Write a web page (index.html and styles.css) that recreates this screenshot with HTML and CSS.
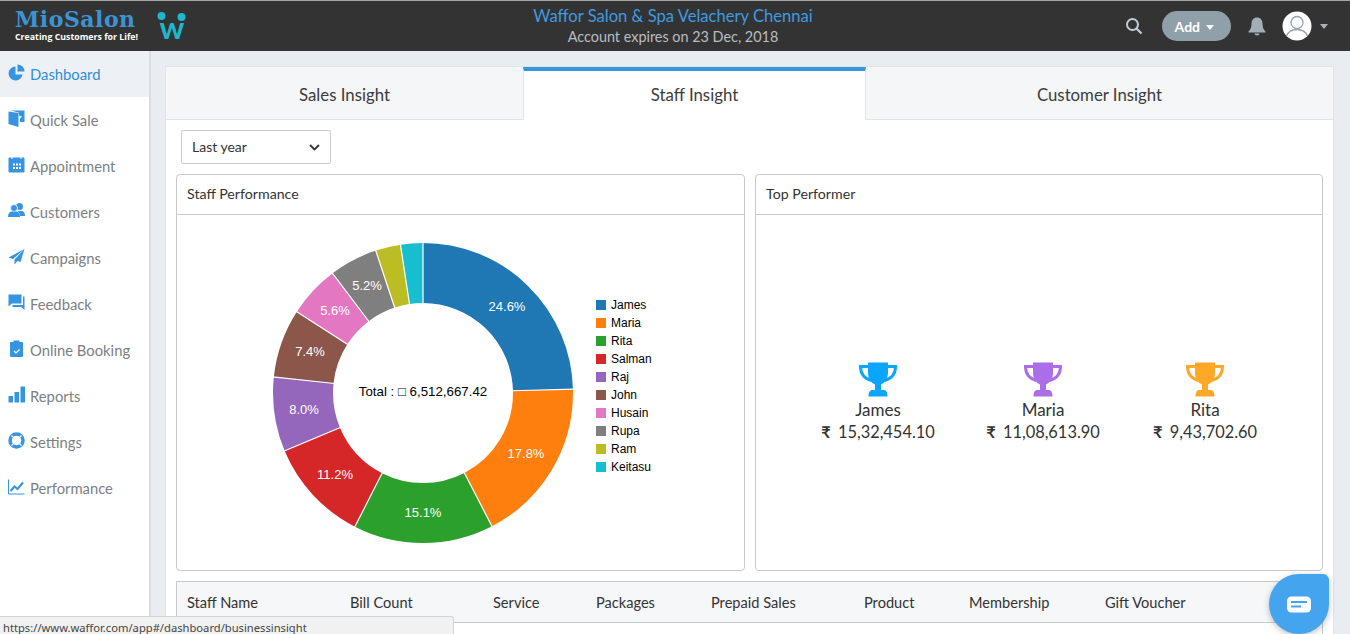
FILE: index.html
```html
<!DOCTYPE html>
<html lang="en">
<head>
<meta charset="utf-8">
<title>MioSalon Dashboard</title>
<link rel="stylesheet" href="styles.css">
</head>
<body>
<svg class="defs" width="0" height="0" aria-hidden="true">
  <symbol id="trophy" viewBox="0 0 38 35">
    <path d="M9 0.500h20v10c0 6.500-3.500 10.500-7 12v5.500h2.500c2.800 0 4 2.500 4 6.500H9.500c0-4 1.200-6.500 4-6.500H16v-5.500c-3.500-1.500-7-5.500-7-12z" fill="currentColor"/>
    <path d="M9 4.500H1.500c0 7 3.500 12 11 14M29 4.500h7.500c0 7-3.500 12-11 14" fill="none" stroke="currentColor" stroke-width="3"/>
  </symbol>
</svg>

<header class="topbar">
  <div class="brand">
    <div class="logo">
      <span class="logo-name">MioSalon</span>
      <span class="logo-tag">Creating Customers for Life!</span>
    </div>
    <svg class="w-mark" width="34" height="40" viewBox="0 0 34 40">
      <circle cx="4.500" cy="10" r="4" fill="#1cb8cf"/>
      <circle cx="24.500" cy="11" r="4" fill="#1cb8cf"/>
      <text x="15" y="33" text-anchor="middle" class="w-letter">w</text>
    </svg>
  </div>
  <div class="head-center">
    <div class="salon">Waffor Salon &amp; Spa Velachery Chennai</div>
    <div class="expiry">Account expires on 23 Dec, 2018</div>
  </div>
  <div class="head-tools">
    <svg class="ico-search" width="18" height="18" viewBox="0 0 18 18"><circle cx="7.500" cy="7.500" r="5.500" fill="none" stroke="#c3ccd2" stroke-width="2"/><path d="M11.500 11.500l5 5" stroke="#c3ccd2" stroke-width="2.200"/></svg>
    <button class="add-btn">Add <span class="caret-w"></span></button>
    <svg class="ico-bell" width="20" height="20" viewBox="0 0 20 20"><path d="M10 1.500c3.500 0 5.500 2.700 5.500 6 0 4 1 6 3 8v1H1.500v-1c2-2 3-4 3-8 0-3.300 2-6 5.500-6z" fill="#a3afb6"/><path d="M7.500 17.500h5c0 1.300-1 2-2.500 2s-2.500-.7-2.500-2z" fill="#a3afb6"/></svg>
    <svg class="ico-avatar" width="30" height="30" viewBox="0 0 30 30"><circle cx="15" cy="15" r="14.500" fill="#fff"/><circle cx="15" cy="11.500" r="6" fill="none" stroke="#9ba3a8" stroke-width="1.300"/><path d="M4.500 25c2-5 6-6.500 10.500-6.500s8.500 1.500 10.500 6.500" fill="none" stroke="#9ba3a8" stroke-width="1.300"/></svg>
    <span class="caret-g"></span>
  </div>
</header>

<div class="layout">
  <nav class="sidebar">
    <a class="nav-item active"><svg width="17" height="17" viewBox="0 0 17 17"><path d="M7.500 2.500a7 7 0 1 0 7 8H7.500z" fill="currentColor"/><path d="M9.500 0.500a7 7 0 0 1 7 7h-7z" fill="currentColor"/></svg>Dashboard</a>
    <a class="nav-item"><svg width="17" height="17" viewBox="0 0 17 17"><path d="M0.500 1.500l10 1.500v14l-10-3z" fill="currentColor"/><path d="M2.500 0.500h14v11.500h-4.500V8.500l2-2-2.500-.5-1-3.500z" fill="currentColor"/></svg>Quick Sale</a>
    <a class="nav-item"><svg width="17" height="17" viewBox="0 0 17 17"><path d="M1.500 1.500h14a1 1 0 0 1 1 1v13a1 1 0 0 1-1 1h-14a1 1 0 0 1-1-1v-13a1 1 0 0 1 1-1z" fill="currentColor"/><path d="M4 0v3M13 0v3" stroke="#fff" stroke-width="1"/><path d="M5 7.500h2v2H5zM8 7.500h2v2H8zM11 7.500h2v2h-2zM5 11h2v2H5zM8 11h2v2H8zM11 11h2v2h-2z" fill="#fff"/></svg>Appointment</a>
    <a class="nav-item"><svg width="17" height="17" viewBox="0 0 17 17"><circle cx="11.500" cy="4.500" r="3.500" fill="currentColor"/><path d="M9.500 9h4c2 0 3.500 1.500 3.500 5h-5c0-2-1-4-2.500-5z" fill="currentColor"/><circle cx="6" cy="6" r="3.500" stroke="#fff" stroke-width=".8" fill="currentColor"/><path d="M0 15c0-3.500 1.500-5.500 4-5.500h4c2.500 0 4 2 4 5.500z" fill="currentColor"/></svg>Customers</a>
    <a class="nav-item"><svg width="17" height="17" viewBox="0 0 17 17"><path d="M16.500 1L0.500 9.500l4.500 1.500zM16.500 1L6.500 11.500v5l3-3.500 3 1z" fill="currentColor"/></svg>Campaigns</a>
    <a class="nav-item"><svg width="17" height="17" viewBox="0 0 17 17"><path d="M0.500 0.500h13v9H4l-3.500 3z" fill="currentColor"/><path d="M15 2.500h1.500V16L13 13H4.500v-2H15z" fill="currentColor"/></svg>Feedback</a>
    <a class="nav-item"><svg width="17" height="17" viewBox="0 0 17 17"><path d="M3 2h2.500V.5h6V2H14a1 1 0 0 1 1 1v13a1 1 0 0 1-1 1H3a1 1 0 0 1-1-1V3a1 1 0 0 1 1-1z" fill="currentColor"/><path d="M6 11l2 2 3.500-3.500" fill="none" stroke="#fff" stroke-width="1.200"/></svg>Online Booking</a>
    <a class="nav-item"><svg width="17" height="17" viewBox="0 0 17 17"><path d="M0.500 10h4.500v6.500H.5zM6.500 6h4.500v10.500H6.500zM12.500 0.500h4.500v16h-4.500z" fill="currentColor"/></svg>Reports</a>
    <a class="nav-item"><svg width="17" height="17" viewBox="0 0 17 17"><circle cx="8.500" cy="8.500" r="6.500" fill="none" stroke="currentColor" stroke-width="3.500"/><path d="M3.500 3.500l2.500 2.500M13.500 3.500L11 6M3.500 13.500L6 11M13.500 13.500L11 11" stroke="#fff" stroke-width="1.200"/></svg>Settings</a>
    <a class="nav-item"><svg width="17" height="17" viewBox="0 0 17 17"><path d="M.5 1.500v14.500h16" fill="none" stroke="currentColor" stroke-width="1"/><path d="M2.500 13l4-4.500 3 2.500 5.500-6.500" fill="none" stroke="currentColor" stroke-width="2"/></svg>Performance</a>
  </nav>

  <main class="content">
    <section class="card">
      <div class="tabs">
        <div class="tab">Sales Insight</div>
        <div class="tab tab-active">Staff Insight</div>
        <div class="tab">Customer Insight</div>
      </div>
      <div class="card-body">
        <div class="select-box"><span class="select-text">Last year</span>
          <svg width="11" height="7" viewBox="0 0 11 7"><path d="M1 1l4.500 4.500L10 1" fill="none" stroke="#333" stroke-width="1.800"/></svg>
        </div>
        <div class="panels">
          <article class="panel">
            <h2 class="panel-head">Staff Performance</h2>
            <div class="chart-body">
              <svg class="donut" width="300" height="300" viewBox="-150 -150 300 300">
                <g transform="rotate(-90)" fill="none" stroke-width="60">
                  <circle r="120" pathLength="100" stroke="#1f77b4" stroke-dasharray="24.6 75.4"/>
                  <circle r="120" pathLength="100" stroke="#ff7f0e" stroke-dasharray="17.8 82.2" stroke-dashoffset="-24.6"/>
                  <circle r="120" pathLength="100" stroke="#2ca02c" stroke-dasharray="15.1 84.9" stroke-dashoffset="-42.4"/>
                  <circle r="120" pathLength="100" stroke="#d62728" stroke-dasharray="11.2 88.8" stroke-dashoffset="-57.5"/>
                  <circle r="120" pathLength="100" stroke="#9467bd" stroke-dasharray="8 92" stroke-dashoffset="-68.7"/>
                  <circle r="120" pathLength="100" stroke="#8c564b" stroke-dasharray="7.4 92.6" stroke-dashoffset="-76.7"/>
                  <circle r="120" pathLength="100" stroke="#e377c2" stroke-dasharray="5.6 94.4" stroke-dashoffset="-84.1"/>
                  <circle r="120" pathLength="100" stroke="#7f7f7f" stroke-dasharray="5.2 94.8" stroke-dashoffset="-89.7"/>
                  <circle r="120" pathLength="100" stroke="#bcbd22" stroke-dasharray="2.7 97.3" stroke-dashoffset="-94.9"/>
                  <circle r="120" pathLength="100" stroke="#17becf" stroke-dasharray="2.4 97.6" stroke-dashoffset="-97.6"/>
                </g>
                <g class="seps">
                  <path d="M0-89V-151"/>
                  <path d="M0-89V-151" transform="rotate(88.56)"/>
                  <path d="M0-89V-151" transform="rotate(152.64)"/>
                  <path d="M0-89V-151" transform="rotate(207)"/>
                  <path d="M0-89V-151" transform="rotate(247.32)"/>
                  <path d="M0-89V-151" transform="rotate(276.12)"/>
                  <path d="M0-89V-151" transform="rotate(302.76)"/>
                  <path d="M0-89V-151" transform="rotate(322.92)"/>
                  <path d="M0-89V-151" transform="rotate(341.64)"/>
                  <path d="M0-89V-151" transform="rotate(351.36)"/>
                </g>
                <g class="pct">
                  <text x="84" y="-82">24.6%</text>
                  <text x="103" y="65">17.8%</text>
                  <text x="0" y="124">15.1%</text>
                  <text x="-88" y="86">11.2%</text>
                  <text x="-119" y="21">8.0%</text>
                  <text x="-113" y="-37">7.4%</text>
                  <text x="-88" y="-78">5.6%</text>
                  <text x="-56" y="-103">5.2%</text>
                </g>
                <text class="total" x="0" y="3">Total : <tspan class="tofu">□</tspan> 6,512,667.42</text>
              </svg>
              <ul class="legend">
                <li><i class="c1"></i>James</li>
                <li><i class="c2"></i>Maria</li>
                <li><i class="c3"></i>Rita</li>
                <li><i class="c4"></i>Salman</li>
                <li><i class="c5"></i>Raj</li>
                <li><i class="c6"></i>John</li>
                <li><i class="c7"></i>Husain</li>
                <li><i class="c8"></i>Rupa</li>
                <li><i class="c9"></i>Ram</li>
                <li><i class="c10"></i>Keitasu</li>
              </ul>
            </div>
          </article>
          <article class="panel">
            <h2 class="panel-head">Top Performer</h2>
            <div class="top-body">
              <div class="performer blue"><svg width="38" height="35"><use href="#trophy"/></svg><div class="p-name">James</div><div class="p-amt"><b>₹</b> 15,32,454.10</div></div>
              <div class="performer purple"><svg width="38" height="35"><use href="#trophy"/></svg><div class="p-name">Maria</div><div class="p-amt"><b>₹</b> 11,08,613.90</div></div>
              <div class="performer orange"><svg width="38" height="35"><use href="#trophy"/></svg><div class="p-name">Rita</div><div class="p-amt"><b>₹</b> 9,43,702.60</div></div>
            </div>
          </article>
        </div>
        <div class="table">
          <div class="thead">
            <span>Staff Name</span><span>Bill Count</span><span>Service</span><span>Packages</span><span>Prepaid Sales</span><span>Product</span><span>Membership</span><span>Gift Voucher</span>
          </div>
        </div>
      </div>
    </section>
  </main>
</div>

<div class="status">https://www.waffor.com/app#/dashboard/businessinsight</div>
<button class="chat" aria-label="Chat">
  <svg width="24" height="17" viewBox="0 0 24 17"><rect width="24" height="16" y=".5" rx="4.500" fill="#fff"/><path d="M4 6h16" stroke="#44a4ee" stroke-width="2"/><path d="M4 10.500h10" stroke="#44a4ee" stroke-width="2"/></svg>
</button>
</body>
</html>
```
FILE: styles.css
```css
* { box-sizing: border-box; }
html, body { margin: 0; height: 100%; overflow: hidden; }
body {
  font-family: Lato, "Noto Sans", sans-serif;
  color: #333;
  background: #e9edf2;
  display: flex;
  flex-direction: column;
}
.defs { display: block; height: 0; }

/* Top bar */
.topbar {
  flex: 0 0 51px;
  background: #333;
  border-top: 1px solid #a5a5a5;
  display: grid;
  grid-template-columns: 1fr auto 1fr;
  align-items: center;
  padding: 0 22px 0 15px;
}
.brand { display: flex; align-items: center; gap: 17px; }
.logo { display: flex; flex-direction: column; width: 125px; margin-top: -4px; }
.logo-name {
  font-family: "DejaVu Serif", serif;
  font-weight: 700;
  font-size: 22px;
  line-height: 26px;
  letter-spacing: .5px;
  color: #3c93d6;
  white-space: nowrap;
}
.logo-tag {
  font-family: "Open Sans", sans-serif;
  font-size: 8.800px;
  line-height: 11px;
  font-weight: 700;
  color: #fff;
  white-space: nowrap;
}
.w-letter { font-family: Lato, sans-serif; font-weight: 700; font-size: 31px; fill: #1cb8cf; }
.head-center { text-align: center; padding-left: 3px; }
.salon { font-size: 16.600px; line-height: 22px; color: #3f9ae0; }
.expiry { font-size: 14.400px; line-height: 20px; color: #b9bdc0; }
.head-tools { display: flex; align-items: center; justify-content: flex-end; }
.ico-search { margin-right: 19px; }
.add-btn {
  width: 69px;
  height: 30px;
  border: 0;
  border-radius: 15px;
  background: #8fa0a9;
  color: #fff;
  font: 700 14px Lato, sans-serif;
  margin-right: 16px;
  padding: 0 4px 0 0;
}
.caret-w, .caret-g {
  display: inline-block;
  width: 0; height: 0;
  border-left: 4.500px solid transparent;
  border-right: 4.500px solid transparent;
  border-top: 5px solid #fff;
  vertical-align: 2px;
  margin-left: 3px;
}
.caret-g { border-top-color: #a9b2b8; margin-left: 8px; }
.ico-bell { margin-right: 15px; }

/* Frame */
.layout { flex: 1; display: flex; min-height: 0; }
.sidebar {
  flex: 0 0 151px;
  background: #fff;
  border-right: 2px solid #d9dde1;
}
.nav-item {
  height: 46px;
  display: flex;
  align-items: center;
  gap: 5px;
  padding-left: 8px;
  font-size: 14.800px;
  color: #7c7f83;
}
.nav-item svg { color: #3794e0; flex: none; margin-top: -4px; }
.active { background: #edf1f5; color: #2f8ed6; }

.content { flex: 1; padding: 15px 16px 0 14px; min-width: 0; overflow: hidden; }
.card { background: #fff; border: 1px solid #dfe4e8; border-bottom: 0; height: 100%; }
.tabs { display: grid; grid-template-columns: 357px 343px 1fr; height: 53px; background: #f4f6f8; }
.tab {
  display: flex;
  align-items: center;
  justify-content: center;
  padding-top: 2px;
  font-size: 16.800px;
  color: #3c3c3c;
  border-bottom: 1px solid #dfe4e8;
}
.tab-active {
  background: #fff;
  padding: 0 0 2px;
  border-top: 4px solid #3498db;
  border-bottom: 0;
  border-left: 1px solid #dfe4e8;
  border-right: 1px solid #dfe4e8;
}
.card-body { padding: 10px 10px 0; }
.select-box {
  width: 150px;
  height: 34px;
  margin-left: 5px;
  border: 1px solid #ccc;
  border-radius: 2px;
  display: flex;
  align-items: center;
  justify-content: space-between;
  padding: 0 10px;
  font-size: 14px;
  background: #fff;
}
.select-text { margin-top: -2px; }
.panels { display: grid; grid-template-columns: 569px 568px; gap: 10px; margin-top: 10px; }
.panel { height: 397px; border: 1px solid #c9c9c9; border-radius: 4px; background: #fff; }
.panel-head {
  margin: 0;
  height: 40px;
  padding: 0 10px;
  font-size: 14.200px;
  font-weight: 400;
  line-height: 37px;
  border-bottom: 1px solid #c9c9c9;
}
.chart-body { display: flex; padding: 28px 0 0 96px; }
.donut { flex: none; overflow: visible; }
.seps path { stroke: #fff; stroke-width: 1.200; }
.pct text { font: 13px "Liberation Sans", sans-serif; fill: #fff; text-anchor: middle; }
.total { font: 13.300px "Liberation Sans", sans-serif; fill: #000; text-anchor: middle; }
.tofu { font-size: 13px; }
.legend {
  list-style: none;
  margin: 53px 0 0 23px;
  padding: 0;
  font: 12px/18px "Liberation Sans", sans-serif;
  color: #000;
}
.legend li { display: flex; align-items: center; gap: 5px; height: 18px; }
.legend i { width: 10px; height: 10px; display: block; }
.c1 { background: #1f77b4; } .c2 { background: #ff7f0e; } .c3 { background: #2ca02c; }
.c4 { background: #d62728; } .c5 { background: #9467bd; } .c6 { background: #8c564b; }
.c7 { background: #e377c2; } .c8 { background: #7f7f7f; } .c9 { background: #bcbd22; }
.c10 { background: #17becf; }
.top-body { display: flex; justify-content: center; padding: 147px 0 0 5px; }
.performer { width: 165px; text-align: center; display: flex; flex-direction: column; align-items: center; }
.performer:last-child { margin-left: -3px; }
.blue svg { color: #0aa5ff; }
.purple svg { color: #ac6ee8; }
.orange svg { color: #ffa726; }
.p-name { font-size: 17px; line-height: 22px; margin-top: 2px; }
.p-amt { font-size: 16.400px; line-height: 22px; white-space: nowrap; }
.p-amt b { margin-right: 3px; }
.table { margin-top: 10px; height: 60px; border: 1px solid #c9c9c9; border-bottom: 0; background: #fff; }
.thead {
  display: grid;
  grid-template-columns: 163px 143px 103px 115px 153px 105px 136px 1fr;
  align-items: center;
  height: 41px;
  padding: 0 10px;
  font-size: 14.600px;
  background: #f6f7f9;
  border-bottom: 1px solid #c9c9c9;
}

/* Overlays */
.status {
  position: absolute;
  left: 0; bottom: 0;
  width: 454px;
  height: 18px;
  background: #f1f1f1;
  border: 1px solid #d4d4d4;
  border-left: 0; border-bottom: 0;
  border-top-right-radius: 3px;
  font: 11.200px/21px "Noto Sans", sans-serif;
  padding-left: 3px;
  color: #444;
  white-space: nowrap;
}
.chat {
  position: absolute;
  left: 1269px; top: 574px;
  width: 60px; height: 60px;
  border: 0;
  padding: 0;
  border-radius: 50% 6px 50% 50%;
  background: #44a4ee;
  box-shadow: 0 2px 6px rgba(0,0,0,.25);
  display: flex;
  align-items: center;
  justify-content: center;
}
```
